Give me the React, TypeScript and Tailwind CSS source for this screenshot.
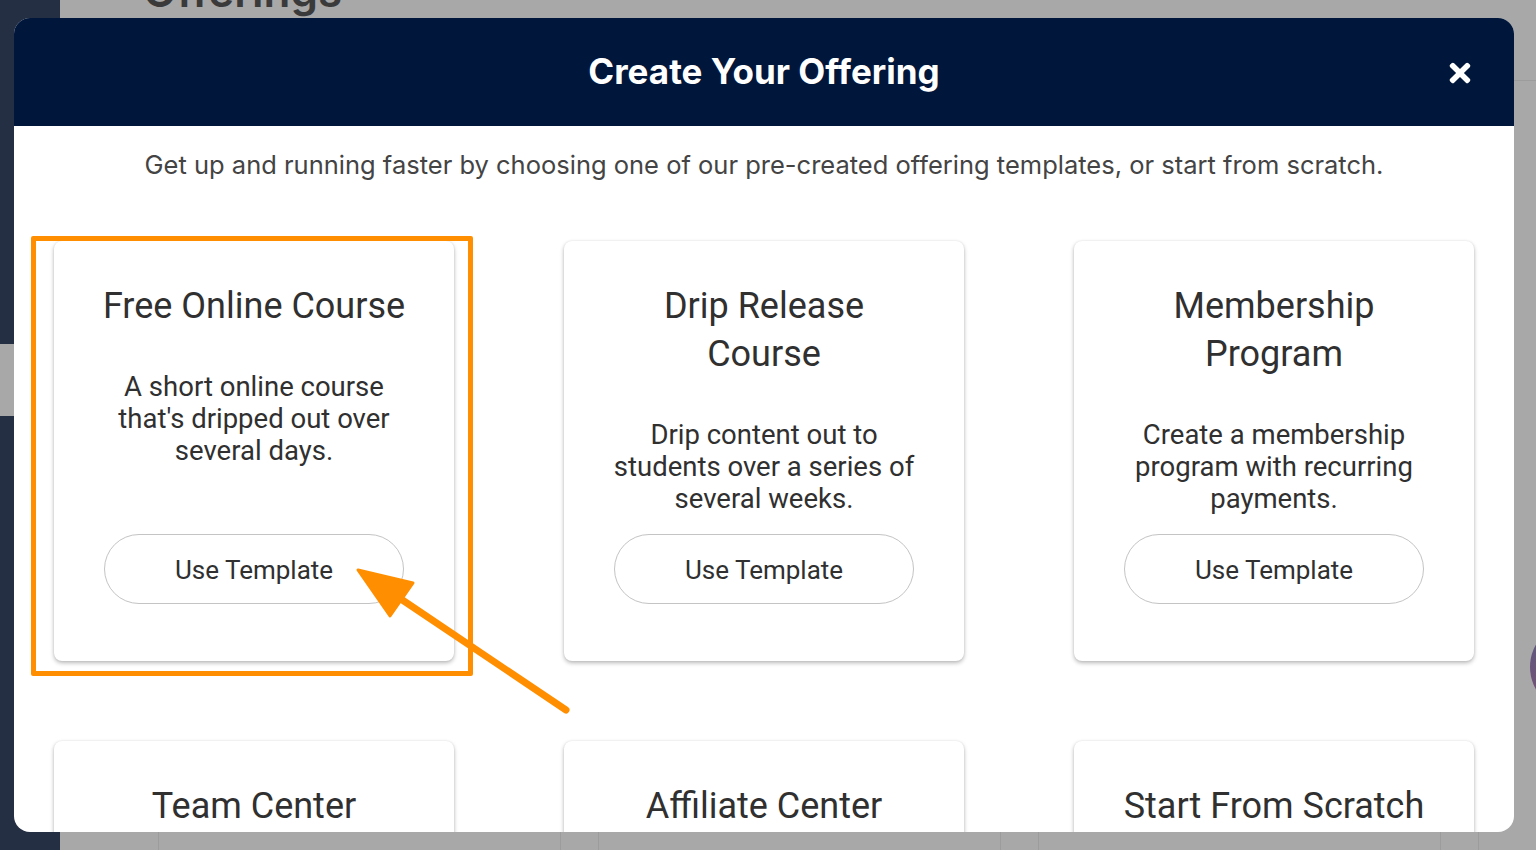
import React from 'react';
import { FaTimes } from 'react-icons/fa';

type Template = {
  title: string;
  desc?: string;
  button?: boolean;
};

const templates: Template[] = [
  { title: 'Free Online Course', desc: "A short online course that's dripped out over several days.", button: true },
  { title: 'Drip Release Course', desc: 'Drip content out to students over a series of several weeks.', button: true },
  { title: 'Membership Program', desc: 'Create a membership program with recurring payments.', button: true },
  { title: 'Team Center' },
  { title: 'Affiliate Center' },
  { title: 'Start From Scratch' },
];

const TemplateCard = ({ t }: { t: Template }) => (
  <div className="h-[420px] rounded-[8px] bg-white shadow-[0_2px_4px_rgba(0,0,0,0.28),0_0_2px_rgba(0,0,0,0.08)] flex flex-col items-center px-[43px] pt-[41px] text-center text-[#303030] font-['Roboto',sans-serif]">
    <h3 className="text-[36px] leading-[48px]">{t.title}</h3>
    {t.desc && <p className="mt-[41px] text-[27.5px] leading-[32px]">{t.desc}</p>}
    {t.button && (
      <button className="mt-auto mb-[57px] w-[300px] h-[70px] shrink-0 rounded-full border-[1.5px] border-[#c4c4c4] bg-white pt-[3px] text-[26px] text-[#303030]">
        Use Template
      </button>
    )}
  </div>
);

const App = () => {
  return (
    <div className="relative w-full h-[850px] overflow-hidden bg-[#a8a8a8] flex">
      {/* page behind the dimmed overlay */}
      <aside className="w-[60px] shrink-0 bg-[#252f43] flex flex-col">
        <div className="h-[344px]" />
        <div className="h-[72px] bg-[#a8a8a8]" />
      </aside>
      <main className="flex-1 flex flex-col">
        <div className="h-[81px] border-b border-[#9c9c9c] pl-[83px]">
          <h1 className="-mt-[35px] text-[44px] leading-[52px] font-semibold text-[#3a3a3a] font-['Inter',sans-serif]">
            Offerings
          </h1>
        </div>
        <div className="mt-auto flex gap-[37px] pl-[98px]">
          <div className="w-[403px] h-[30px] border-x border-[#9c9c9c]" />
          <div className="w-[403px] h-[30px] border-x border-[#9c9c9c]" />
          <div className="w-[403px] h-[30px] border-x border-[#9c9c9c]" />
          <div className="w-[403px] h-[30px] border-x border-[#9c9c9c]" />
        </div>
      </main>

      {/* chat bubble peeking in at the right */}
      <div className="absolute left-[1530px] top-[622px] w-[90px] h-[90px] rounded-full bg-gradient-to-b from-[#565a82] to-[#7a4f72]" />

      {/* modal */}
      <div className="absolute left-[14px] top-[18px] w-[1500px] h-[814px] rounded-[16px] overflow-hidden bg-white flex flex-col">
        <div className="relative h-[108px] shrink-0 bg-[#00163a] flex items-center justify-center">
          <h2 className="text-[35px] font-bold text-white font-['Inter',sans-serif] -mt-[2px]">Create Your Offering</h2>
          <FaTimes className="absolute right-[39px] top-[40px] text-white" size={30} />
        </div>
        <p className="pt-[23px] text-center text-[25.5px] leading-[32px] text-[#444] font-['Inter',sans-serif]">
          Get up and running faster by choosing one of our pre-created offering templates, or start from scratch.
        </p>
        <div className="mt-[60px] grid grid-cols-[400px_400px_400px] gap-x-[110px] gap-y-[80px] px-[40px]">
          {templates.map((t) => (
            <TemplateCard key={t.title} t={t} />
          ))}
        </div>
      </div>

      {/* annotation: highlight box and arrow */}
      <div className="absolute left-[31px] top-[236px] w-[442px] h-[440px] border-[5px] border-[#ff8f00] rounded-[2px]" />
      <svg className="absolute left-0 top-0" width="1536" height="850" viewBox="0 0 1536 850">
        <line x1="566" y1="710" x2="392" y2="593" stroke="#ff8f00" strokeWidth="7" strokeLinecap="round" />
        <polygon points="358,570 413,583 390,616" fill="#ff8f00" stroke="#ff8f00" strokeWidth="3" strokeLinejoin="round" />
      </svg>
    </div>
  );
};

export default App;
